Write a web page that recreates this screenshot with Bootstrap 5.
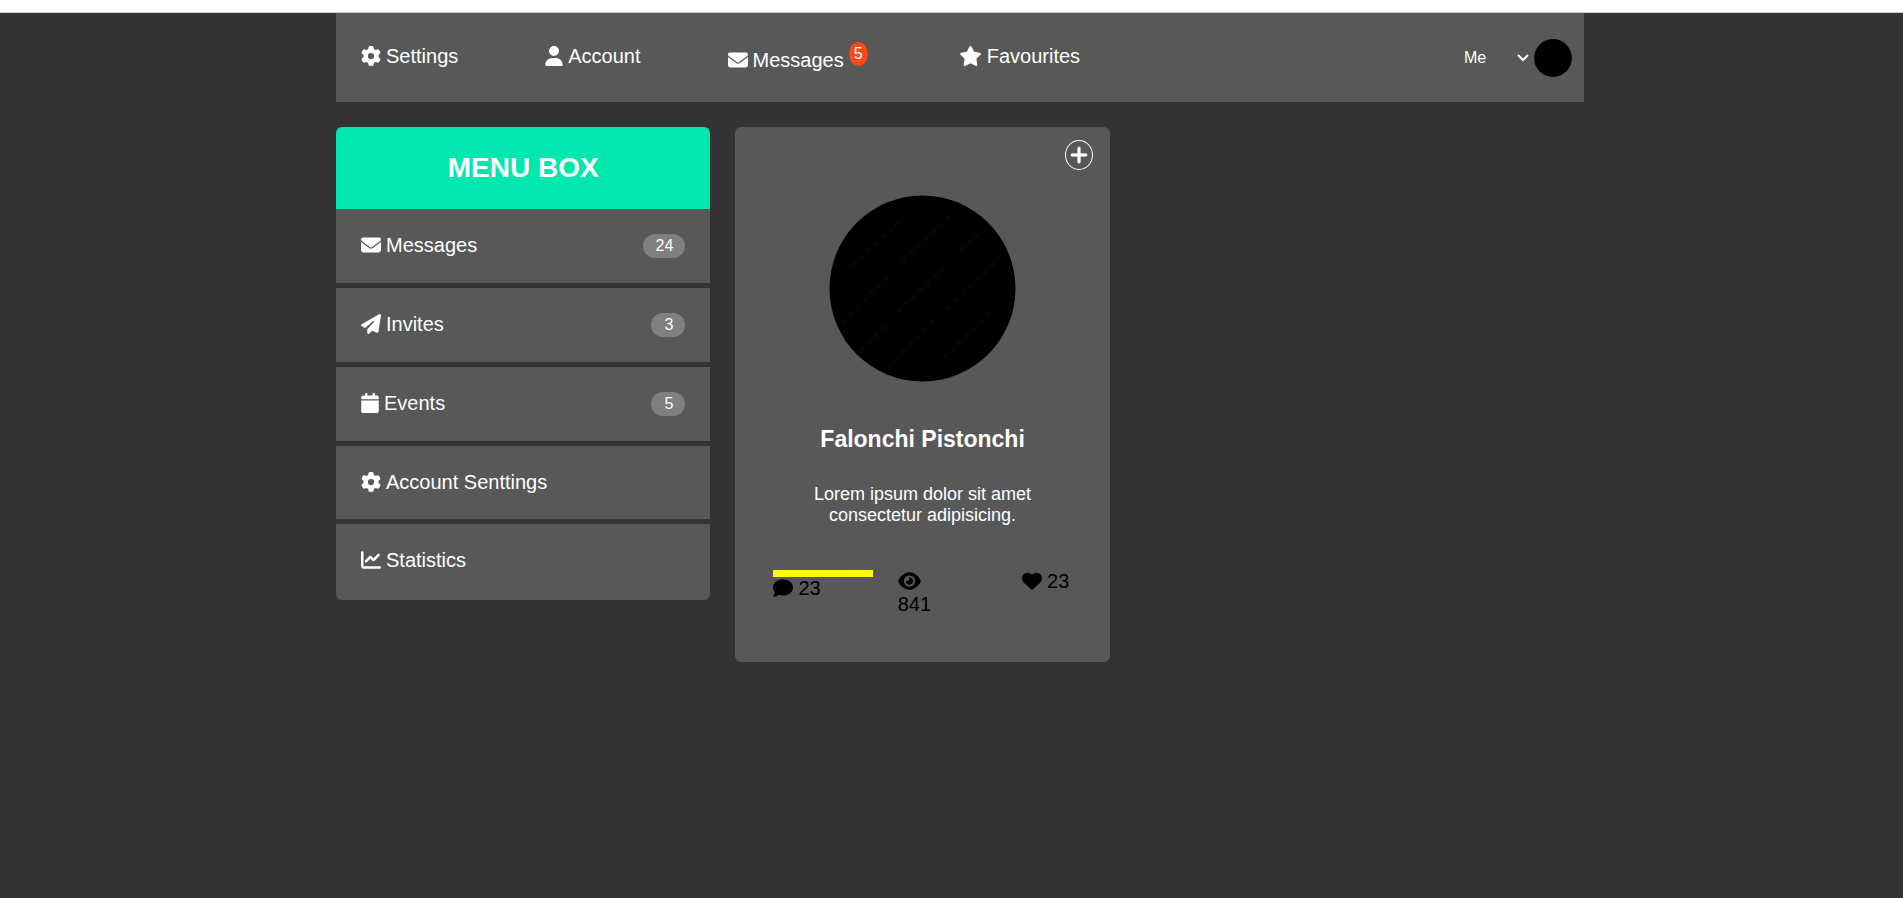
<!DOCTYPE html>
<html lang="en">
<head>
<meta charset="utf-8">
<meta name="viewport" content="width=device-width, initial-scale=1">
<title>Dashboard</title>
<link href="https://cdn.jsdelivr.net/npm/bootstrap@5.3.0/dist/css/bootstrap.min.css" rel="stylesheet">
<style>
  body { background: #333; color: #fff; font-family: "Liberation Sans", Arial, sans-serif; font-size: 20px; line-height: 23px; }
  a { color: inherit; text-decoration: none; }
  .top-strip { height: 13px; background: #fff; border-bottom: 1px solid #c8c8c8; }
  .page-pad { padding-left: 17px; }
  .page-wrap { max-width: 1248px; }
  .panel { background: #585858; }
  .ico { height: 20px; fill: currentColor; flex: none; margin: 0 5px 2px 0; }
  .line-link { display: flex; align-items: center; height: 23px; white-space: nowrap; }
  .top-bar { min-height: 89px; padding: 12px 12px 12px 25px; }
  .top-list { column-gap: 87px; min-height: 29px; padding-top: 2px; }
  .alert-count { background: #ff4719; font-size: 16px; line-height: 24px; width: 19px; text-align: center; border-radius: 50%; margin: 0 4px 14px 5px; }
  .me-select { appearance: none; border: 0; background: transparent url("data:image/svg+xml,%3Csvg xmlns='http://www.w3.org/2000/svg' width='12' height='8'%3E%3Cpath d='M1 1l5 5 5-5' fill='none' stroke='white' stroke-width='2'/%3E%3C/svg%3E") no-repeat right 5px center; color: #fff; font-size: 16px; width: 74px; height: 24px; padding: 0 4px; }
  .me-select option { color: #000; }
  .me-pic { width: 38px; height: 38px; }
  .cards { display: grid; grid-template-columns: repeat(auto-fill, minmax(300px, 30%)); column-gap: 25px; row-gap: 25px; align-items: start; margin-top: 25px; }
  .rounded-box { border-radius: 6px; overflow: hidden; }
  .menu-title { background: #00e8ae; font-size: 28px; font-weight: 700; line-height: 32px; padding: 25px; margin: 0; text-align: center; }
  .menu-rows { display: grid; row-gap: 5px; }
  .menu-rows a { display: flex; justify-content: space-between; align-items: flex-start; padding: 25px; }
  .menu-rows li:last-child a { padding-bottom: 28px; }
  .count-pill { background: #808080; border-radius: 12px; font-size: 16px; line-height: 24px; padding: 0 12px 0 13px; }
  .profile { position: relative; padding: 68px 38px 46px; }
  .add-btn { position: absolute; top: 13px; right: 17px; width: 28px; height: 30px; border: 1px solid #fff; border-radius: 50%; background: none; color: #fff; padding: 0; display: flex; align-items: center; justify-content: center; }
  .profile-pic { width: 187px; height: 187px; }
  .profile-name { font-size: 23px; font-weight: 700; line-height: 27px; margin: 44px 0 31px; }
  .profile-text { font-size: 18px; line-height: 21px; margin: 0 auto 44px; max-width: 230px; }
  .stats { color: #000; }
  .stats .line-link { color: #000; }
  .active-stat { border-top: 7px solid #ff0; }
</style>
</head>
<body>
<svg class="d-none" xmlns="http://www.w3.org/2000/svg">
  <symbol id="i-gear" viewBox="0 0 512 512"><path d="M495.9 166.600c3.200 8.700.5 18.400-6.400 24.600l-43.300 39.400c1.100 8.300 1.700 16.800 1.700 25.400s-.6 17.100-1.700 25.400l43.300 39.400c6.900 6.200 9.600 15.900 6.400 24.600-4.400 11.900-9.700 23.300-15.800 34.300l-4.700 8.100c-6.600 11-14 21.400-22.100 31.200-5.900 7.200-15.700 9.600-24.500 6.800l-55.700-17.700c-13.400 10.300-28.200 18.900-44 25.400l-12.500 57.100c-2 9.100-9 16.300-18.200 17.800-13.800 2.300-28 3.500-42.500 3.500s-28.700-1.200-42.500-3.500c-9.200-1.500-16.200-8.700-18.200-17.800l-12.500-57.100c-15.800-6.500-30.600-15.100-44-25.400l-55.600 17.800c-8.800 2.800-18.600.3-24.500-6.800-8.100-9.800-15.500-20.200-22.100-31.200l-4.700-8.100c-6.100-11-11.400-22.400-15.800-34.300-3.200-8.700-.5-18.400 6.400-24.600l43.300-39.400C64.600 273.100 64 264.600 64 256s.6-17.100 1.700-25.400l-43.300-39.400c-6.900-6.200-9.600-15.900-6.400-24.600 4.400-11.900 9.700-23.300 15.800-34.300l4.700-8.100c6.600-11 14-21.400 22.100-31.200 5.900-7.200 15.700-9.600 24.500-6.800l55.700 17.700c13.400-10.300 28.200-18.900 44-25.400l12.500-57.100c2-9.100 9-16.300 18.200-17.800C227.300 1.200 241.500 0 256 0s28.700 1.200 42.500 3.500c9.200 1.500 16.200 8.700 18.200 17.800l12.500 57.100c15.800 6.500 30.600 15.100 44 25.400l55.700-17.700c8.800-2.800 18.600-.3 24.500 6.800 8.100 9.800 15.500 20.200 22.100 31.200l4.700 8.100c6.100 11 11.400 22.400 15.800 34.300zM256 336a80 80 0 1 0 0-160 80 80 0 1 0 0 160z"/></symbol>
  <symbol id="i-user" viewBox="0 0 448 512"><path d="M224 256a128 128 0 1 0 0-256 128 128 0 1 0 0 256zm-45.700 48C79.800 304 0 383.800 0 482.300 0 498.700 13.300 512 29.700 512h388.600c16.400 0 29.700-13.300 29.700-29.700 0-98.500-79.800-178.300-178.300-178.300h-91.400z"/></symbol>
  <symbol id="i-mail" viewBox="0 0 512 512"><path d="M48 64C21.500 64 0 85.500 0 112c0 15.100 7.100 29.300 19.200 38.400l217.600 163.200c11.400 8.500 27 8.500 38.400 0l217.600-163.200C504.900 141.300 512 127.100 512 112c0-26.500-21.500-48-48-48H48zM0 176v208c0 35.300 28.700 64 64 64h384c35.300 0 64-28.700 64-64V176L294.400 339.200c-22.800 17.100-54 17.100-76.800 0L0 176z"/></symbol>
  <symbol id="i-star" viewBox="0 0 576 512"><path d="M316.900 18C311.600 7 300.400 0 288.100 0s-23.400 7-28.800 18L195 150.300 51.400 171.500c-12 1.800-22 10.200-25.700 21.700s-.7 24.200 7.900 32.700L137.800 329l-24.600 145.700c-2 12 3 24.200 12.900 31.300s23 8 33.800 2.300l128.300-68.500 128.300 68.500c10.800 5.700 23.900 4.900 33.800-2.300s14.900-19.300 12.900-31.300L438.500 329 542.700 225.900c8.600-8.500 11.700-21.200 7.900-32.700s-13.700-19.900-25.700-21.700L381.200 150.300 316.900 18z"/></symbol>
  <symbol id="i-plane" viewBox="0 0 512 512"><path d="M498.100 5.600c10.100 7 15.400 19.100 13.500 31.200l-64 416c-1.500 9.700-7.400 18.200-16 23s-18.900 5.400-28 1.600L284 427.700l-68.500 74.100c-8.900 9.700-22.900 12.900-35.200 8.100S160 493.200 160 480v-83.600c0-4 1.500-7.800 4.200-10.800l167.600-182.800c5.800-6.300 5.600-16-.4-22s-15.700-6.400-22-.7L106 360.800l-88.300-44.200C7.100 311.300.3 300.700 0 288.900s5.900-22.800 16.100-28.700l448-256c10.700-6.100 23.900-5.500 34 1.400z"/></symbol>
  <symbol id="i-cal" viewBox="0 0 448 512"><path d="M96 32v32H48C21.500 64 0 85.500 0 112v48h448v-48c0-26.500-21.500-48-48-48h-48V32c0-17.700-14.300-32-32-32s-32 14.300-32 32v32H160V32c0-17.700-14.300-32-32-32S96 14.300 96 32zm352 160H0v272c0 26.500 21.500 48 48 48h352c26.500 0 48-21.500 48-48V192z"/></symbol>
  <symbol id="i-chart" viewBox="0 0 512 512"><path d="M64 64c0-17.700-14.300-32-32-32S0 46.300 0 64v336c0 44.200 35.800 80 80 80h400c17.700 0 32-14.300 32-32s-14.300-32-32-32H80c-8.800 0-16-7.200-16-16V64zm406.600 86.600c12.500-12.500 12.500-32.800 0-45.300s-32.800-12.500-45.300 0L320 210.700l-57.400-57.300c-12.500-12.500-32.800-12.500-45.300 0l-112 112c-12.500 12.500-12.500 32.800 0 45.300s32.800 12.500 45.300 0L240 221.300l57.400 57.300c12.500 12.500 32.800 12.500 45.300 0l128-128z"/></symbol>
  <symbol id="i-chat" viewBox="0 0 512 512"><path d="M512 240c0 114.900-114.600 208-256 208-37.100 0-72.300-6.400-104.100-17.900-11.900 8.700-31.300 20.600-54.300 30.600C73.600 471.100 44.700 480 16 480c-6.500 0-12.300-3.900-14.800-9.900s-1.100-12.800 3.400-17.400l.3-.3c.3-.3.700-.7 1.300-1.400 1.100-1.200 2.800-3.100 4.900-5.700 4.100-5 9.600-12.400 15.200-21.600 10-16.600 19.500-38.400 21.400-62.900C17.700 326.800 0 285.100 0 240 0 125.100 114.600 32 256 32s256 93.100 256 208z"/></symbol>
  <symbol id="i-eye" viewBox="0 0 576 512"><path d="M288 32c-80.800 0-145.500 36.800-192.600 80.600C48.600 156 17.300 208 2.500 243.700c-3.300 7.900-3.300 16.700 0 24.600C17.300 304 48.600 356 95.400 399.400 142.500 443.200 207.200 480 288 480s145.500-36.800 192.600-80.600c46.800-43.500 78.100-95.400 93-131.100 3.300-7.900 3.300-16.700 0-24.600-14.900-35.700-46.200-87.700-93-131.100C433.500 68.800 368.800 32 288 32zM144 256a144 144 0 1 1 288 0 144 144 0 1 1-288 0zm144-64c0 35.300-28.700 64-64 64-7.100 0-13.900-1.200-20.300-3.300-5.500-1.800-11.900 1.600-11.700 7.400.3 6.900 1.300 13.800 3.200 20.700 13.700 51.200 66.400 81.600 117.600 67.900s81.600-66.400 67.900-117.600c-11.100-41.500-47.800-69.400-88.600-71.100-5.800-.2-9.200 6.100-7.400 11.700 2.100 6.400 3.300 13.200 3.300 20.300z"/></symbol>
  <symbol id="i-heart" viewBox="0 0 512 512"><path d="M47.600 300.400l180.700 168.700c7.500 7 17.400 10.900 27.700 10.900s20.200-3.900 27.700-10.900l180.700-168.700C494.800 272.100 512 232.400 512 190.900v-5.800c0-69.900-50.500-129.500-119.400-141C347 36.500 300.600 51.400 268 84l-12 12-12-12c-32.600-32.600-79-47.500-124.600-39.900C50.500 55.600 0 115.200 0 185.100v5.800c0 41.500 17.200 81.200 47.600 109.500z"/></symbol>
  <symbol id="i-plus" viewBox="0 0 448 512"><path stroke="currentColor" stroke-width="16" d="M256 80c0-17.700-14.300-32-32-32s-32 14.300-32 32v144H48c-17.700 0-32 14.300-32 32s14.300 32 32 32h144v144c0 17.700 14.300 32 32 32s32-14.300 32-32V288h144c17.700 0 32-14.300 32-32s-14.300-32-32-32H256V80z"/></symbol>
  <symbol id="i-photo" viewBox="0 0 187 187"><circle cx="93.500" cy="93.500" r="93"/><g stroke="#090909" stroke-width="5" stroke-dasharray="1 2 2 1 1 3"><path d="M22 72L75 22M72 67L124 18M130 57L160 30M12 130L60 80M67 119L119 69M117 115L170 63M30 157L58 130M58 174L107 123M113 164L166 114"/></g></symbol>
</svg>

<div class="top-strip"></div>
<div class="page-pad">
  <div class="page-wrap mx-auto">
    <header class="panel top-bar d-flex flex-wrap align-items-center justify-content-between">
      <nav aria-label="Main">
        <ul class="top-list list-unstyled d-flex flex-wrap align-items-start mb-0">
          <li><a class="line-link" href="#"><svg class="ico" width="20"><use href="#i-gear"/></svg>Settings</a></li>
          <li><a class="line-link" href="#"><svg class="ico" width="18"><use href="#i-user"/></svg>Account</a></li>
          <li class="pt-1"><a class="line-link" href="#"><svg class="ico" width="20"><use href="#i-mail"/></svg>Messages<span class="alert-count">5</span></a></li>
          <li><a class="line-link" href="#"><svg class="ico" width="23"><use href="#i-star"/></svg>Favourites</a></li>
        </ul>
      </nav>
      <div class="d-flex align-items-center">
        <select class="me-select" aria-label="Profile"><option>Me</option></select>
        <svg class="me-pic" role="img" aria-label="Profile picture"><use href="#i-photo"/></svg>
      </div>
    </header>

    <main class="cards">
      <nav class="rounded-box" aria-label="Menu box">
        <h1 class="menu-title">MENU BOX</h1>
        <ul class="menu-rows list-unstyled mb-0">
          <li class="panel"><a href="#"><span class="line-link"><svg class="ico" width="20"><use href="#i-mail"/></svg>Messages</span><span class="count-pill">24</span></a></li>
          <li class="panel"><a href="#"><span class="line-link"><svg class="ico" width="20"><use href="#i-plane"/></svg>Invites</span><span class="count-pill">3</span></a></li>
          <li class="panel"><a href="#"><span class="line-link"><svg class="ico" width="18"><use href="#i-cal"/></svg>Events</span><span class="count-pill">5</span></a></li>
          <li class="panel"><a href="#"><span class="line-link"><svg class="ico" width="20"><use href="#i-gear"/></svg>Account Senttings</span></a></li>
          <li class="panel"><a href="#"><span class="line-link"><svg class="ico" width="20"><use href="#i-chart"/></svg>Statistics</span></a></li>
        </ul>
      </nav>

      <article class="panel rounded-box profile text-center">
        <button class="add-btn" type="button" aria-label="Add"><svg width="18" height="20" fill="currentColor"><use href="#i-plus"/></svg></button>
        <svg class="profile-pic d-block mx-auto" role="img" aria-label="Falonchi Pistonchi"><use href="#i-photo"/></svg>
        <h2 class="profile-name">Falonchi Pistonchi</h2>
        <p class="profile-text">Lorem ipsum dolor sit amet consectetur adipisicing.</p>
        <div class="stats row g-0 text-start">
          <div class="col-4 active-stat"><a class="line-link" href="#"><svg class="ico" width="20"><use href="#i-chat"/></svg>23</a></div>
          <div class="col-2 offset-1"><a href="#" class="d-block"><span class="line-link"><svg class="ico" width="23"><use href="#i-eye"/></svg></span>841</a></div>
          <div class="col-2 offset-3"><a class="line-link" href="#"><svg class="ico" width="20"><use href="#i-heart"/></svg>23</a></div>
        </div>
      </article>
    </main>
  </div>
</div>
<script src="https://cdn.jsdelivr.net/npm/bootstrap@5.3.0/dist/js/bootstrap.bundle.min.js"></script>
</body>
</html>
